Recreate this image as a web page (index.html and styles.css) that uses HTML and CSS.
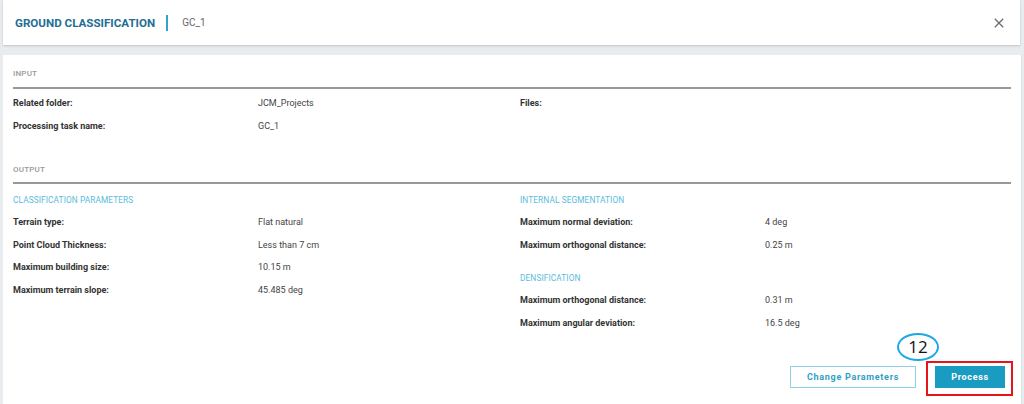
FILE: index.html
```html
<!DOCTYPE html>
<html>
<head>
<meta charset="utf-8">
<link rel="stylesheet" href="styles.css">
</head>
<body>
<div class="page">
  <header class="header">
    <h1 class="title">GROUND CLASSIFICATION</h1>
    <span class="divider"></span>
    <span class="task">GC_1</span>
    <button class="close" aria-label="Close">
      <svg width="10" height="10" viewBox="0 0 10 10"><path d="M0.8 0.8 L9.2 9.2 M9.2 0.8 L0.8 9.2" stroke="#6b6b6b" stroke-width="1.3" fill="none"/></svg>
    </button>
  </header>

  <main class="card">
    <div class="section-title">INPUT</div>
    <div class="cols input-cols">
      <div class="col">
        <div class="row"><span class="label">Related folder:</span><span class="value">JCM_Projects</span></div>
        <div class="row"><span class="label">Processing task name:</span><span class="value">GC_1</span></div>
      </div>
      <div class="col">
        <div class="row"><span class="label">Files:</span><span class="value"></span></div>
      </div>
    </div>

    <div class="section-title output-title">OUTPUT</div>
    <div class="cols">
      <div class="col">
        <div class="group">
          <div class="subhead">CLASSIFICATION PARAMETERS</div>
          <div class="row"><span class="label">Terrain type:</span><span class="value">Flat natural</span></div>
          <div class="row"><span class="label">Point Cloud Thickness:</span><span class="value">Less than 7 cm</span></div>
          <div class="row"><span class="label">Maximum building size:</span><span class="value">10.15 m</span></div>
          <div class="row"><span class="label">Maximum terrain slope:</span><span class="value">45.485 deg</span></div>
        </div>
      </div>
      <div class="col">
        <div class="group">
          <div class="subhead">INTERNAL SEGMENTATION</div>
          <div class="row"><span class="label">Maximum normal deviation:</span><span class="value">4 deg</span></div>
          <div class="row"><span class="label">Maximum orthogonal distance:</span><span class="value">0.25 m</span></div>
        </div>
        <div class="group group-gap">
          <div class="subhead">DENSIFICATION</div>
          <div class="row"><span class="label">Maximum orthogonal distance:</span><span class="value">0.31 m</span></div>
          <div class="row"><span class="label">Maximum angular deviation:</span><span class="value">16.5 deg</span></div>
        </div>
      </div>
    </div>

    <div class="actions">
      <button class="btn btn-outline">Change Parameters</button>
      <span class="highlight">
        <button class="btn btn-primary">Process</button>
        <span class="callout">12</span>
      </span>
    </div>
  </main>
</div>
</body>
</html>
```

FILE: styles.css
```css
* { box-sizing: border-box; }

html, body {
  margin: 0;
  padding: 0;
  background: #e8ecef;
  font-family: Roboto, "Liberation Sans", Arial, sans-serif;
  overflow: hidden;
}

.page {
  padding: 0 2px 0 3px;
  height: 404px;
  display: flex;
  flex-direction: column;
}

.header {
  height: 45px;
  background: #fff;
  display: flex;
  align-items: center;
  padding: 0 16px 0 12px;
  box-shadow: 0 1px 2px rgba(0,0,0,0.18);
  margin-right: 2px;
}

.title {
  margin: 0;
  font-size: 11.6px;
  font-weight: 700;
  color: #1f6e93;
}

.divider {
  width: 2px;
  height: 16px;
  background: #2ea4cf;
  margin: 0 14px 0 11px;
}

.task {
  font-size: 10px;
  color: #666;
}

.close {
  margin-left: auto;
  background: none;
  border: 0;
  padding: 0;
  width: 10px;
  height: 10px;
  display: flex;
  cursor: pointer;
}

.card {
  margin-top: 10px;
  flex: 1;
  background: #fff;
  padding: 13px 10px 0 10px;
  border-right: 1px solid #dde2e5;
  position: relative;
}

.section-title {
  font-size: 8px;
  line-height: 12px;
  font-weight: 500;
  color: #9a9a9a;
  padding-bottom: 7px;
  border-bottom: 2px solid #989898;
  letter-spacing: 0.2px;
}

.output-title {
  margin-top: 27px;
  padding-bottom: 6px;
}

.cols {
  display: grid;
  grid-template-columns: 507px 1fr;
}

.input-cols {
  padding-top: 3px;
}

.group { padding-top: 5px; }
.group-gap { margin-top: 11px; padding-top: 0; }

.subhead {
  font-size: 8.3px;
  line-height: 22px;
  color: #58bcdc;
  letter-spacing: 0.1px;
}

.row {
  display: grid;
  grid-template-columns: 245px 1fr;
  height: 22.5px;
  line-height: 22.5px;
  font-size: 9px;
}

.label {
  font-weight: 700;
  color: #333;
}

.value {
  color: #444;
}

.actions {
  position: absolute;
  right: 8px;
  top: 306px;
  display: flex;
  align-items: flex-start;
  gap: 10px;
}

.btn {
  font-family: Roboto, "Liberation Sans", Arial, sans-serif;
  font-size: 9px;
  font-weight: 700;
  letter-spacing: 0.7px;
  height: 22px;
  padding: 0;
  cursor: pointer;
}

.btn-outline {
  width: 126px;
  margin-top: 5px;
  background: #fff;
  border: 1px solid #8fd2e7;
  color: #2f9fc5;
}

.btn-primary {
  width: 70px;
  background: #1a9bc1;
  border: 0;
  color: #fff;
}

.highlight {
  position: relative;
  display: flex;
  border: 2px solid #e8141c;
  padding: 3px 6px 6px 7px;
}

.callout {
  position: absolute;
  left: -31px;
  top: -30px;
  width: 42px;
  height: 28px;
  border: 2px solid #1aa8e6;
  border-radius: 50%;
  font-family: "Open Sans", "Liberation Sans", sans-serif;
  font-size: 17px;
  line-height: 24px;
  text-align: center;
  color: #111;
  background: #fff;
}
```
